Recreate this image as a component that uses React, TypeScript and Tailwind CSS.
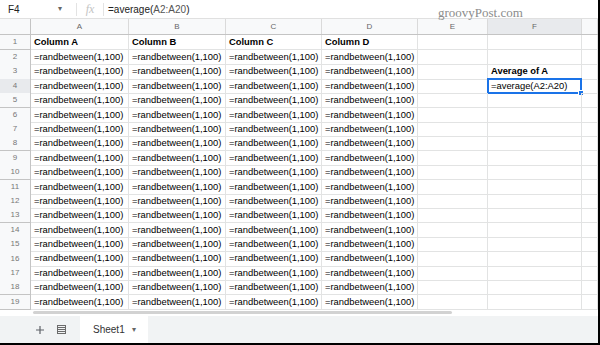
const FORMULA = "=randbetween(1,100)";

const COLS = ["A", "B", "C", "D", "E", "F", ""];

function cellsFor(n: number): string[] {
  if (n === 1) return ["Column A", "Column B", "Column C", "Column D", "", "", ""];
  const f = n === 3 ? "Average of A" : n === 4 ? "=average(A2:A20)" : "";
  return [FORMULA, FORMULA, FORMULA, FORMULA, "", f, ""];
}

const GRID = "grid grid-cols-[31px_98px_97px_96px_96px_70px_94px_16px]";

function FormulaBar() {
  return (
    <div className="relative flex h-[19px] items-center border-b border-[#e0e0e0] bg-white text-[10px] text-[#222]">
      <span className="w-[58px] pl-[8px]">F4</span>
      <span className="w-[18px] text-[8px] text-[#666]">▾</span>
      <span className="h-[13px] w-px bg-[#e3e3e3]" />
      <span className="w-[26px] text-center font-['Liberation_Serif',serif] text-[12px] italic text-[#c4c4c4]">fx</span>
      <span className="h-[13px] w-px bg-[#e3e3e3]" />
      <span className="pl-[4px]">
        =average(<span className="text-[#555]">A2:A20</span>)
      </span>
      <span className="absolute left-[438px] top-[3px] font-['Liberation_Serif',serif] text-[13px] text-[#8c8c8c]">
        groovyPost.com
      </span>
    </div>
  );
}

function HeaderRow() {
  return (
    <div className={`${GRID} h-[16px] border-b border-[#c4c4c4] bg-[#f8f9fa] text-[8px] text-[#666]`}>
      <div className="border-r border-[#c4c4c4]" />
      {COLS.map((c, i) => (
        <div
          key={i}
          className={`flex items-center justify-center border-r border-[#dadada] ${c === "F" ? "bg-[#e8eaed]" : ""}`}
        >
          {c}
        </div>
      ))}
    </div>
  );
}

function Row({ n }: { n: number }) {
  const cells = cellsFor(n);
  const bold = n === 1;
  return (
    <div className={`${GRID} ${n === 1 ? "h-[15px]" : "h-[14.4px]"} text-[9.4px] text-black`}>
      <div
        className={`flex items-center justify-center border-r border-b border-[#c4c4c4] text-[8px] text-[#777] ${
          n === 4 ? "bg-[#e8eaed]" : "bg-[#f8f9fa]"
        }`}
      >
        {n}
      </div>
      {cells.map((c, i) => {
        const isSel = n === 4 && i === 5;
        const isBold = bold || (n === 3 && i === 5);
        return (
          <div
            key={i}
            className={`relative flex items-center overflow-visible whitespace-nowrap border-r border-b border-[#e2e3e3] pl-[3px] ${
              isBold ? "font-bold" : ""
            }`}
          >
            {c}
            {isSel && (
              <>
                <span className="absolute -inset-[1px] border-2 border-[#1a73e8]" />
                <span className="absolute -bottom-[3px] -right-[3px] h-[6px] w-[6px] border border-white bg-[#1a73e8]" />
              </>
            )}
          </div>
        );
      })}
    </div>
  );
}

function TabBar() {
  return (
    <div className="flex h-[27px] items-stretch bg-[#f1f3f4] text-[#5f6368]">
      <div className="flex w-[80px] items-center gap-[12px] pl-[35px]">
        <svg width="10" height="10" viewBox="0 0 10 10">
          <path d="M5 1v8M1 5h8" stroke="#5f6368" strokeWidth="1.2" />
        </svg>
        <svg width="9" height="9" viewBox="0 0 9 9">
          <rect x="0.5" y="0.5" width="8" height="8" fill="none" stroke="#6b6b6b" strokeWidth="1" />
          <path d="M1 2.5h7M1 4.5h7M1 6.5h7" stroke="#6b6b6b" strokeWidth="1" />
        </svg>
      </div>
      <div className="flex w-[68px] items-center bg-white pl-[13px] text-[10px] font-medium text-[#333]">
        Sheet1
        <span className="ml-[7px] text-[8px] text-[#666]">▾</span>
      </div>
    </div>
  );
}

export default function App() {
  const rows = Array.from({ length: 19 }, (_, i) => i + 1);
  return (
    <div className="h-[345px] w-[600px] overflow-hidden border-r-2 border-b-2 border-black bg-white font-['Liberation_Sans',Arial,sans-serif]">
      <FormulaBar />
      <HeaderRow />
      {rows.map((n) => (
        <Row key={n} n={n} />
      ))}
      {/* horizontal scrollbar */}
      <div className="flex h-[7px] items-center bg-white pl-[33px]">
        <div className="h-[3px] w-[419px] rounded-full bg-[#d2d2d2]" />
      </div>
      <TabBar />
    </div>
  );
}
